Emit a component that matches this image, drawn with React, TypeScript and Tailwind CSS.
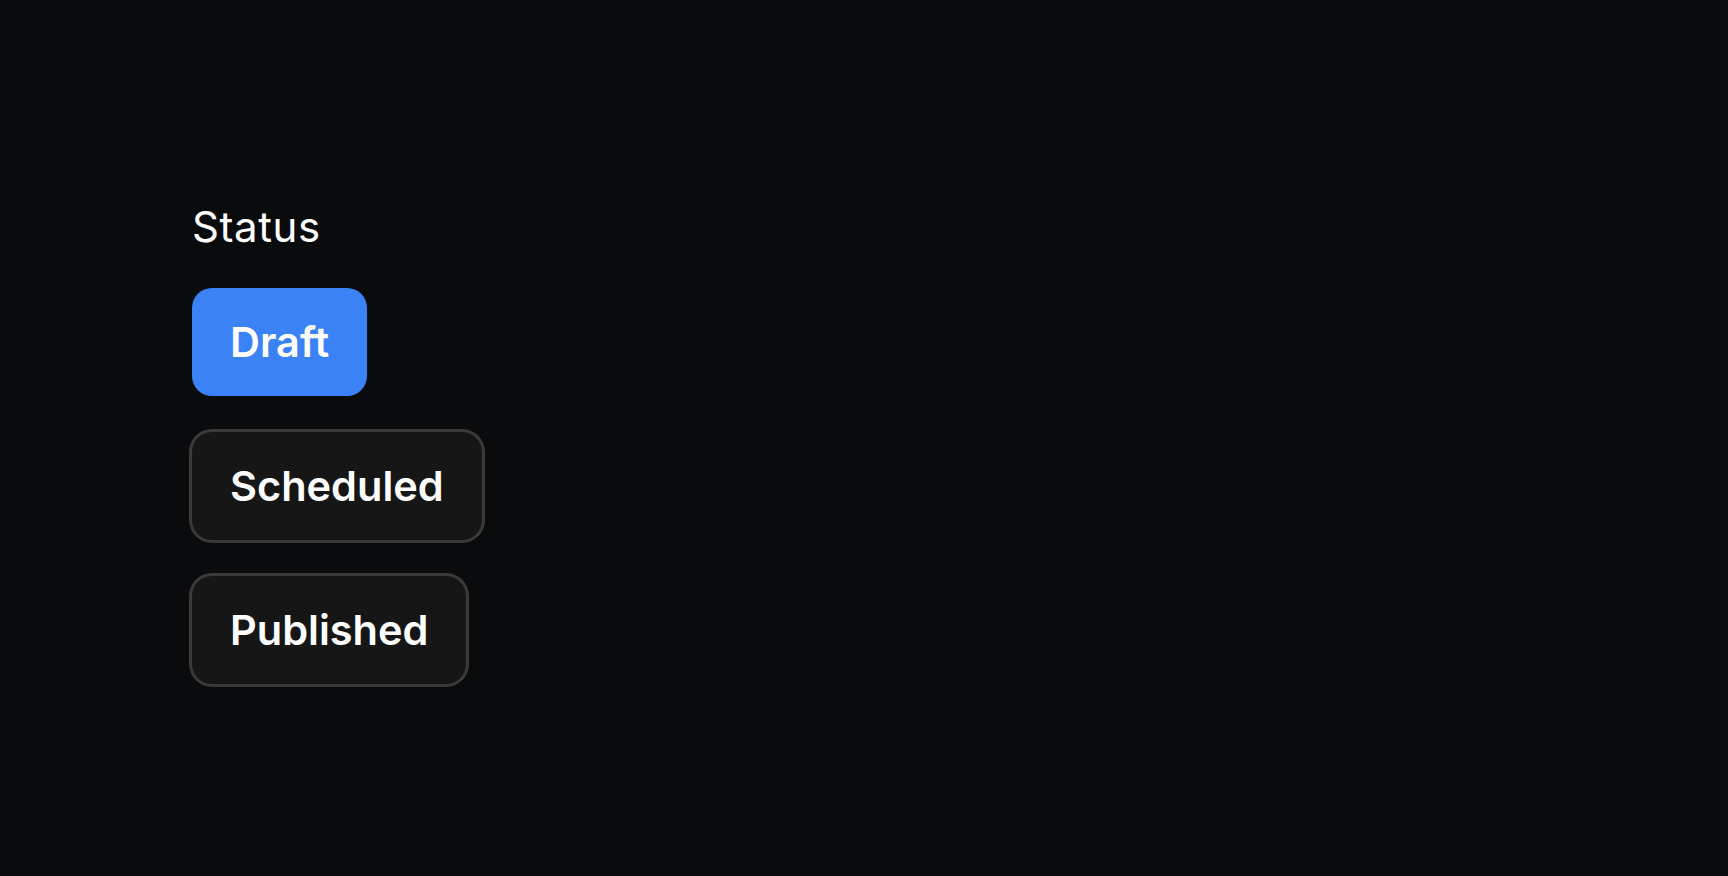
function StatusButton({ label, active }: { label: string; active?: boolean }) {
  return (
    <button
      className={
        active
          ? "h-[108px] px-[38px] rounded-[20px] bg-[#3b82f6] text-white text-[41.5px] font-semibold flex items-center"
          : "h-[108px] px-[38px] rounded-[20px] bg-[#161616] ring-[3px] ring-[#3a3a3a] text-white text-[41.5px] font-semibold flex items-center"
      }
    >
      {label}
    </button>
  );
}

export default function App() {
  return (
    <div
      className="min-h-screen w-full bg-[#0a0b0d] text-white pl-[192px] pt-[197px]"
      style={{ fontFamily: "Inter, 'Noto Sans', sans-serif" }}
    >
      <p className="text-[42px] leading-[60px] tracking-[0.6px] mb-[31px]">Status</p>
      <div className="flex flex-col items-start gap-9">
        <StatusButton label="Draft" active />
        <StatusButton label="Scheduled" />
        <StatusButton label="Published" />
      </div>
    </div>
  );
}
